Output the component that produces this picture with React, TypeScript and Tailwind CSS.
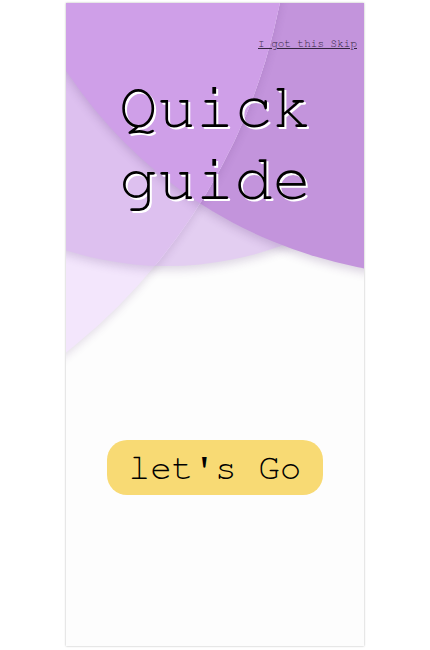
import React from "react";

// decorative bubbles behind the quick guide header
function Bubbles() {
  return (
    <div className="absolute inset-0 overflow-hidden">
      <div className="absolute left-[-233px] top-[-405px] w-[668px] h-[668px] rounded-full bg-[#e3cef1] shadow-[0_4px_10px_rgba(80,40,110,0.18)]" />
      <div className="absolute left-[-75px] top-[-639px] w-[912px] h-[912px] rounded-full bg-[#c394dc] shadow-[0_4px_10px_rgba(80,40,110,0.2)]" />
      <div className="absolute left-[-955px] top-[-704px] w-[1180px] h-[1180px] rounded-full overflow-hidden bg-[#f3e6fc] shadow-[0_3px_8px_rgba(80,40,110,0.15)]">
        <div className="absolute left-[722px] top-[299px] w-[668px] h-[668px] rounded-full bg-[#ddc0ef] shadow-[0_4px_10px_rgba(80,40,110,0.18)]" />
        <div className="absolute left-[880px] top-[65px] w-[912px] h-[912px] rounded-full bg-[#cf9fe8] shadow-[0_4px_10px_rgba(80,40,110,0.2)]" />
      </div>
    </div>
  );
}

export default function App() {
  return (
    <div className="min-h-[650px] bg-white pt-[3px] font-['Nimbus_Mono_PS','Nimbus_Mono_L','FreeMono','Courier','Liberation_Mono',monospace]">
      <div className="relative mx-auto w-[298px] h-[643px] bg-[#fdfdfd] shadow-[0_0_2px_rgba(0,0,0,0.3)]">
        <Bubbles />
        <div className="relative flex flex-col">
          <div className="flex justify-end pt-[34px] pr-[7px]">
            <a href="#" className="text-[11px] leading-[13px] text-[#34263f] underline">
              I got this Skip
            </a>
          </div>
          <h1 className="mt-[22px] text-center text-[64px] leading-[72px] font-normal text-black [text-shadow:2px_2px_0_#ffffff]">
            Quick
            <br />
            guide
          </h1>
          <div className="mt-[224px] flex justify-center">
            <button className="w-[216px] h-[55px] rounded-[20px] bg-[#f8da74] text-[36px] text-black flex items-center justify-center">
              let's Go
            </button>
          </div>
        </div>
      </div>
    </div>
  );
}
